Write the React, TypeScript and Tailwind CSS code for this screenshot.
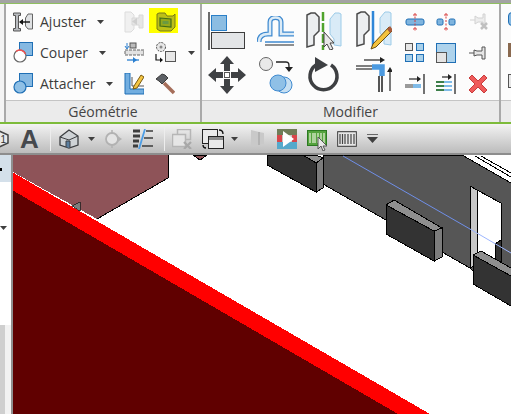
import React from 'react';

type IconProps = { w?: number; h?: number; className?: string; children: React.ReactNode };

const Ico: React.FC<IconProps> = ({ w = 20, h = 20, className = '', children }) => (
  <svg width={w} height={h} viewBox={`0 0 ${w} ${h}`} className={`shrink-0 ${className}`}>
    {children}
  </svg>
);

const Caret: React.FC<{ className?: string }> = ({ className = '' }) => (
  <svg width="7" height="4" viewBox="0 0 7 4" className={`shrink-0 ${className}`}>
    <path d="M0 0h7L3.5 4z" fill="#3f3f3f" />
  </svg>
);

const Doc = () => (
  <path d="M1 3 L5 1 H9 L13 5 V19 L8 24 V33 L1 35z" fill="#eceef0" stroke="#4a4a4a" strokeWidth="1.5" />
);

const Ghost = () => (
  <path d="M33 1 H29 L24 7 V22 L28 27 V33 L35 34 V2z" fill="#d9ebf7" stroke="#9ccbe8" strokeWidth="1" />
);

/* ---- Géométrie ---- */
const Ajuster = () => (
  <Ico>
    <path d="M0.5 1h7v2.5h-2v13h2V19h-7v-2.5h2v-13h-2z" fill="#b9bcc0" stroke="#555" />
    <path d="M12.5 6 L15 2h4.5v15H15l-2.500-3z" fill="#dfe1e3" stroke="#666" />
    <path d="M17 10H7" stroke="#111" strokeWidth="1.400" />
    <path d="M6 10l4-3v6z" fill="#111" />
  </Ico>
);
const Couper = () => (
  <Ico h={21}>
    <rect x="6.500" y="0.500" width="13" height="13" fill="#86b9e2" stroke="#1f6fb5" />
    <circle cx="7" cy="14" r="6" fill="#fff" stroke="#666" strokeWidth="1.200" />
    <path d="M3 9.500a6 6 0 0 1 9.500 2.500" fill="none" stroke="#ef5050" strokeWidth="1.400" />
  </Ico>
);
const Attacher = () => (
  <Ico h={21}>
    <rect x="6.500" y="0.500" width="13" height="13" fill="#86b9e2" stroke="#1f6fb5" />
    <circle cx="7" cy="14" r="6" fill="#8fc0e6" stroke="#1f6fb5" strokeWidth="1.200" />
  </Ico>
);
const Coping = () => (
  <Ico h={22}>
    <path d="M1 1h6l3 3v14l-3 3H1z" fill="#f0f0f0" stroke="#dcdcdc" />
    <path d="M8 7h7V4h4v13h-4v-3H8z" fill="#e6e6e6" stroke="#d8d8d8" />
    <path d="M8 10.500l5-3.500v7z" fill="#cfcfcf" />
  </Ico>
);
const Wall = () => (
  <Ico h={20}>
    <path d="M1 2l2-1h6l2 3h6l2-2v13l-4 4H4l-3-2z" fill="#bcbf18" stroke="#787a18" />
    <path d="M4 6l11 1v8L4 14z" fill="#95a81c" stroke="#3f6c18" strokeWidth="1.200" />
    <rect x="6.500" y="9" width="6" height="3" fill="#6a9a40" />
  </Ico>
);
const Split = () => (
  <Ico h={21}>
    <rect x="6" y="1" width="6" height="5" fill="#bbb" stroke="#555" />
    <path d="M3 1v5M1 4l2 3 2-3" fill="none" stroke="#2a7fd0" />
    <rect x="1" y="8" width="19" height="5" fill="#e2e2e2" stroke="#666" strokeDasharray="3 1" />
    <path d="M3 18h12" stroke="#2a7fd0" strokeWidth="1.300" />
    <path d="M9 15l4 3-4 3z" fill="#2a7fd0" />
  </Ico>
);
const Swap = () => (
  <Ico w={22} h={21}>
    <circle cx="6" cy="5" r="4.500" fill="#e7e7e7" stroke="#555" strokeDasharray="2 1" />
    <circle cx="6" cy="5" r="1.500" fill="#888" />
    <rect x="10.500" y="9.500" width="10" height="10" fill="#e7e7e7" stroke="#555" />
    <path d="M1 12v6h6" fill="none" stroke="#111" strokeWidth="1.200" />
    <path d="M8 18l-3-2.500v5z" fill="#111" />
  </Ico>
);
const Corner = () => (
  <Ico h={22}>
    <path d="M1 0h5v16h14v5H1z" fill="#72aee0" stroke="#1f6fb5" />
    <path d="M8 4v9h12" fill="none" stroke="#555" />
    <path d="M10 13l7-11 3 2-7 11-4 1z" fill="#f4c542" stroke="#7a5a10" />
  </Ico>
);
const Hammer = () => (
  <Ico h={22}>
    <path d="M9 10l10 10" stroke="#a56e5a" strokeWidth="3.500" />
    <path d="M1 6l6-5 3 1 3 3-6 6-3-3z" fill="#5d6065" stroke="#3a3a3a" />
  </Ico>
);

/* ---- Modifier, grands ---- */
const Align = () => (
  <Ico w={38} h={38}>
    <path d="M1 0v38" stroke="#3d3d3d" strokeWidth="1.500" />
    <rect x="3.500" y="3.500" width="15" height="15" fill="#8cbde2" stroke="#2a7fc8" />
    <rect x="3.500" y="20.500" width="33" height="16" fill="#e3e5e7" stroke="#3d3d3d" />
  </Ico>
);
const Offset = () => (
  <Ico w={38} h={30}>
    <path d="M2 26c0-6 4-8 9-8h2V6c0-6 11-6 11 0v12h13" fill="none" stroke="#3f8ad0" strokeWidth="5" />
    <path d="M2 26c0-6 4-8 9-8h2V6c0-6 11-6 11 0v12h13" fill="none" stroke="#dcebf6" strokeWidth="2.500" />
    <path d="M8 29h29" stroke="#6b6b6b" strokeWidth="1.500" />
    <path d="M8 26h29" stroke="#3f8ad0" strokeWidth="1.500" />
  </Ico>
);
const MirrorPick = () => (
  <Ico w={36} h={38}>
    <Doc />
    <Ghost />
    <path d="M17 0v38" stroke="#4fa32c" strokeWidth="2.500" strokeDasharray="9 2" />
    <path d="M18 20v15l3-3 3 6 3-1-3-6h4z" fill="#e8e8e8" stroke="#444" />
  </Ico>
);
const MirrorDraw = () => (
  <Ico w={36} h={40}>
    <Doc />
    <Ghost />
    <path d="M17 0v37" stroke="#2f86d8" strokeWidth="2.500" />
    <path d="M17 33l16-17 3 4-16 16-5 2z" fill="#f4c23c" stroke="#6b4f12" />
    <path d="M31 18l3-3 3 4-3 3z" fill="#a85a3a" />
  </Ico>
);
const MoveIco = () => (
  <Ico w={38} h={38}>
    <path d="M19 0l7 8h-4v7h-6V8h-4zM19 38l-7-8h4v-7h6v7h4zM0 19l8-7v4h7v6H8v4zM38 19l-8 7v-4h-7v-6h7v-4z" fill="#3f4144" />
    <rect x="16.500" y="16.500" width="5" height="5" fill="#fff" stroke="#555" />
  </Ico>
);
const CopyIco = () => (
  <Ico w={36} h={38}>
    <circle cx="9" cy="8" r="6.500" fill="#e9e9e9" stroke="#666" />
    <path d="M19 6h10c3 0 3 2 3 5" fill="none" stroke="#222" strokeWidth="1.300" />
    <path d="M32 16l-4-5h8z" fill="#222" />
    <circle cx="27" cy="29" r="8" fill="#c6dff2" stroke="#3f8ad0" />
    <circle cx="21" cy="27" r="8" fill="#8fc0e6" stroke="#3f8ad0" />
  </Ico>
);
const RotateIco = () => (
  <Ico w={34} h={38}>
    <path d="M10 9A13.500 13.500 0 1 0 25 9" fill="none" stroke="#3d3f42" strokeWidth="3.500" />
    <path d="M9 1l13 8-13 7z" fill="#3d3f42" />
  </Ico>
);
const TrimIco = () => (
  <Ico w={36} h={36}>
    <path d="M0 9h24M0 12h16" stroke="#555" strokeWidth="1.300" />
    <path d="M8 3h16" stroke="#222" strokeWidth="1.200" />
    <path d="M24 0l5 3-5 3z" fill="#222" />
    <path d="M16 10h10v9" fill="none" stroke="#4c9ae0" strokeWidth="5.500" />
    <path d="M26 19v16M23 19v16" stroke="#555" strokeWidth="2" />
    <path d="M34 34V13" stroke="#222" strokeWidth="1.200" />
    <path d="M34 10l3 5h-6z" fill="#222" />
  </Ico>
);

/* ---- Modifier, petits ---- */
const Cut1 = () => (
  <Ico w={20} h={18}>
    <rect x="1" y="6" width="18" height="6" rx="2" fill="#7fb4de" stroke="#1f6fb5" />
    <path d="M10 0v18" stroke="#d83a3a" strokeDasharray="2 1.500" />
    <path d="M8 2h4M8 16h4" stroke="#d83a3a" />
  </Ico>
);
const Cut2 = () => (
  <Ico w={20} h={18}>
    <rect x="1" y="6" width="6" height="6" rx="1.500" fill="#7fb4de" stroke="#1f6fb5" />
    <rect x="13" y="6" width="6" height="6" rx="1.500" fill="#7fb4de" stroke="#1f6fb5" />
    <path d="M10 0v18" stroke="#d83a3a" strokeDasharray="2 1.500" />
    <path d="M8 2h4M8 16h4" stroke="#d83a3a" />
  </Ico>
);
const UnpinOff = () => (
  <Ico w={20} h={20}>
    <path d="M1 8h5M6 4l3 2h5V2h2v12h-2v-4H9l-3 2z" fill="#ededed" stroke="#d2d2d2" />
    <path d="M12 11l6 6M18 11l-6 6" stroke="#c0c0c0" strokeWidth="2.500" />
  </Ico>
);
const ArrayIco = () => (
  <Ico w={20} h={20}>
    <rect x="0.500" y="0.500" width="7" height="7" fill="#e6e6e6" stroke="#555" />
    <rect x="11.500" y="0.500" width="7" height="7" fill="#a8d0ea" stroke="#1f6fb5" />
    <rect x="0.500" y="11.500" width="7" height="7" fill="#a8d0ea" stroke="#1f6fb5" />
    <rect x="11.500" y="11.500" width="7" height="7" fill="#a8d0ea" stroke="#1f6fb5" />
  </Ico>
);
const ScaleIco = () => (
  <Ico w={20} h={20}>
    <rect x="0.500" y="0.500" width="19" height="19" fill="#aed3ec" stroke="#1f6fb5" />
    <rect x="0.500" y="9.500" width="10" height="10" fill="#e4e4e4" stroke="#555" />
  </Ico>
);
const PinIco = () => (
  <Ico w={18} h={14}>
    <path d="M0 7h5" stroke="#555" />
    <path d="M5 4l3 1h5V1h3v12h-3V9H8l-3 1z" fill="#e6e6e6" stroke="#555" />
  </Ico>
);
const TrimOne = () => (
  <Ico w={20} h={20}>
    <path d="M19 0v20" stroke="#444" strokeWidth="1.500" />
    <path d="M4 5h9" stroke="#222" strokeWidth="1.200" />
    <path d="M16 5l-4-3v6z" fill="#222" />
    <rect x="0" y="10" width="8" height="4" fill="#9a9a9a" />
    <rect x="8" y="10" width="8" height="4" fill="#7fbbe8" />
  </Ico>
);
const TrimMany = () => (
  <Ico w={20} h={20}>
    <path d="M19 0v20" stroke="#444" strokeWidth="1.500" />
    <path d="M6 3h7" stroke="#222" strokeWidth="1.200" />
    <path d="M16 3l-4-3v6z" fill="#222" />
    <path d="M0 8h8M0 12h8M0 16h8" stroke="#3d7f4a" strokeWidth="2" />
    <path d="M8 8h8M8 12h8M8 16h8" stroke="#7fbbe8" strokeWidth="2" />
  </Ico>
);
const DeleteIco = () => (
  <Ico w={18} h={18}>
    <path d="M3 0l6 6 6-6 3 3-6 6 6 6-3 3-6-6-6 6-3-3 6-6-6-6z" fill="#ef5b5b" stroke="#c83c3c" />
  </Ico>
);

/* ---- Barre d'outils ---- */
const House = () => (
  <Ico w={20} h={20}>
    <path d="M1 8l9-7 9 6v9l-9 3-9-3z" fill="#cfd3d6" stroke="#3d3f42" strokeWidth="1.300" />
    <path d="M1 8l9 3 9-4" fill="none" stroke="#3d3f42" />
    <path d="M7 18v-6h4v7" fill="#5b7fa0" stroke="#3d3f42" />
  </Ico>
);
const Target = () => (
  <Ico w={18} h={18}>
    <circle cx="8" cy="9" r="6" fill="#e4e4e4" stroke="#b2b2b2" strokeWidth="1.800" />
    <path d="M8 0v3M8 15v3" stroke="#b2b2b2" strokeWidth="1.500" />
    <path d="M18 9l-5-3.500v7z" fill="#b2b2b2" />
  </Ico>
);
const Lines = () => (
  <Ico w={20} h={20}>
    <path d="M0 2h7M0 7h7M0 12h6M0 17h5" stroke="#3d3d3d" strokeWidth="3" />
    <path d="M13 2h7M11 9h9M9 17h11" stroke="#3d3d3d" strokeWidth="1.500" />
    <path d="M12 0L6 20" stroke="#4d9ee6" strokeWidth="1.800" />
  </Ico>
);
const WinOff = () => (
  <Ico w={20} h={20}>
    <rect x="5.500" y="0.500" width="13" height="10" fill="none" stroke="#b6b6b6" strokeWidth="1.500" />
    <rect x="0.500" y="5.500" width="13" height="12" fill="#e6e6e6" stroke="#b6b6b6" strokeWidth="1.500" />
    <path d="M12 13l7 7M19 13l-7 7" stroke="#a8a8a8" strokeWidth="2.200" />
  </Ico>
);
const WinSwitch = () => (
  <Ico w={22} h={20}>
    <rect x="0.500" y="0.500" width="15" height="14" fill="#e9e9e9" stroke="#222" />
    <rect x="6.500" y="7.500" width="15" height="12" fill="#e9e9e9" stroke="#222" />
    <rect x="7" y="8" width="14" height="3" fill="#8a8a8a" />
    <path d="M17 1c3 0 4 1 4 4M1 16c0 2 1 3 3 3" fill="none" stroke="#111" strokeWidth="1.300" />
  </Ico>
);
const ShieldOff = () => (
  <Ico w={15} h={19}>
    <path d="M1 1l8 2 5 1v11l-5 1-8 2z" fill="#c9c9c9" />
    <path d="M9 3v13" stroke="#ababab" strokeWidth="1.500" />
  </Ico>
);
const Player = () => (
  <Ico w={20} h={20}>
    <rect width="20" height="6" y="0" fill="#6f7d58" />
    <rect width="20" height="7" y="6" fill="#c9c5c0" />
    <rect width="20" height="7" y="13" fill="#55a9cb" />
    <rect x="0" y="6" width="5" height="7" fill="#d8464a" />
    <rect x="15" y="6" width="5" height="7" fill="#d8464a" />
    <path d="M6 2l11 8-11 8z" fill="#fff" />
  </Ico>
);
const BarGreen = () => (
  <Ico w={22} h={22}>
    <rect x="0.500" y="1.500" width="19" height="15" fill="#55a33e" stroke="#2c7a22" />
    <path d="M3 4v10M6 4v10M8 4v10M11 4v10M14 4v10M17 4v10" stroke="#eaf3dc" strokeWidth="1.200" />
    <path d="M11 8v12l3-3 2 5 2-1-2-4h4z" fill="#e8e8e8" stroke="#555" />
  </Ico>
);
const BarGrey = () => (
  <Ico w={20} h={16}>
    <rect x="0.500" y="0.500" width="19" height="15" rx="1" fill="#e6e6e6" stroke="#555" strokeWidth="1.300" />
    <path d="M3 3v10M5.500 3v10M8 3v10M11 3v10M14 3v10M17 3v10" stroke="#444" strokeWidth="1.200" />
  </Ico>
);
const MenuDown = () => (
  <Ico w={11} h={9}>
    <path d="M0 0h11" stroke="#3f3f3f" strokeWidth="1.500" />
    <path d="M0 3h11L5.500 9z" fill="#3f3f3f" />
  </Ico>
);

const Sep = () => <div className="w-px h-[24px] bg-[#a9a9a9] shrink-0 border-r border-[#ededed]" />;

const GeoRow: React.FC<{ icon: React.ReactNode; label: string; caretGap: string; a: React.ReactNode; b: React.ReactNode; tail?: boolean }> = ({ icon, label, caretGap, a, b, tail }) => (
  <div className="flex items-center h-[31px] pl-[7px]">
    <div className="w-5 flex justify-center">{icon}</div>
    <div className="w-[91px] pl-[7px] flex items-center">
      <span className="text-[14px] leading-none text-[#3c3c3c]">{label}</span>
      <Caret className={caretGap} />
    </div>
    <div className="w-[31px]">{a}</div>
    <div className="w-5">{b}</div>
    {tail && <Caret className="ml-[13px]" />}
  </div>
);

const PanelTitle: React.FC<{ text: string }> = ({ text }) => (
  <div className="h-[22px] bg-[#ebebeb] border-t border-[#c4c4c4] flex items-center justify-center text-[14px] text-[#444]">
    {text}
  </div>
);

const Scene = () => (
  <svg viewBox="13 155 498 259" width="498" height="259" className="block" shapeRendering="crispEdges">
    <rect x="13" y="155" width="498" height="259" fill="#fff" />
    {/* toit */}
    <path d="M13 155H168V178L97 219 13 172z" fill="#8e5358" />
    <path d="M168 155V178L97 219" fill="none" stroke="#000" />
    <path d="M13 172.500L430 414H398L13 190.500z" fill="#ff0000" />
    <path d="M13 190.500L398 414H13z" fill="#600000" />
    <path d="M72 206l8-4v9z" fill="#7e7e7e" stroke="#222" strokeWidth="0.800" />
    <path d="M193 155h14l-7 5z" fill="#8e5358" stroke="#000" />
    {/* mur */}
    <path d="M323 155H462L511 183V306L470 268 323 184z" fill="#565656" stroke="#000" />
    <path d="M462 155L511 183" stroke="#000" fill="none" />
    <path d="M475 156L511 177" stroke="#000" fill="none" />
    <path d="M481 156L511 173" stroke="#000" fill="none" />
    {/* ligne de niveau */}
    <path d="M343 156L470 229" stroke="#6f8fe8" fill="none" shapeRendering="auto" />
    {/* porte */}
    <path d="M470 186L477 190V264L470 268z" fill="#c6c6c6" stroke="#000" />
    <path d="M477 190L501 203V270H477z" fill="#fff" stroke="#000" />
    <path d="M495 244L501 240V268H495z" fill="#333" stroke="#000" />
    <path d="M470 229L511 253" stroke="#9db6ff" fill="none" shapeRendering="auto" />
    {/* bloc 1 */}
    <path d="M267 155V165L316 192V163L303 155z" fill="#333" stroke="#000" />
    <path d="M316 163L323 158V188L316 192z" fill="#7c7c7c" stroke="#000" />
    <path d="M303 155L316 163 323 158 316 155z" fill="#8f8f8f" stroke="#000" />
    {/* bloc 2 */}
    <path d="M386 205V234L434 261V231z" fill="#333" stroke="#000" />
    <path d="M434 231L442 228V257L434 261z" fill="#7c7c7c" stroke="#000" />
    <path d="M386 205L394 200 442 228 434 231z" fill="#8f8f8f" stroke="#000" />
    {/* bloc 3 */}
    <path d="M473 255V284L511 306V276z" fill="#333" stroke="#000" />
    <path d="M473 255L481 251 511 268V276z" fill="#8f8f8f" stroke="#000" />
  </svg>
);

export default function App() {
  return (
    <div className="w-[511px] h-[414px] overflow-hidden flex flex-col bg-white font-['Open_Sans','Noto_Sans',sans-serif]">
      <div className="h-[3px] bg-[#a3a3a3]" />
      <div className="h-px bg-[#8fbf60]" />

      {/* ruban */}
      <div className="flex h-[118px] bg-[#fcfcfc]">
        <div className="w-[6px] border-r-2 border-[#a9a9a9] bg-[#f4f4f4] shrink-0" />

        <div className="w-[194px] shrink-0 flex flex-col">
          <div className="h-[96px] pt-[2px]">
            <GeoRow icon={<Ajuster />} label="Ajuster" caretGap="ml-[11px]" a={<Coping />} b={
              <div className="relative">
                <div className="absolute left-[-6px] top-[-4px] w-[29px] h-[25px] bg-[#ffff00]" />
                <div className="relative ml-[1px]"><Wall /></div>
              </div>
            } />
            <GeoRow icon={<Couper />} label="Couper" caretGap="ml-[11px]" a={<Split />} b={<Swap />} tail />
            <GeoRow icon={<Attacher />} label="Attacher" caretGap="ml-[10px]" a={<Corner />} b={<Hammer />} />
          </div>
          <PanelTitle text="Géométrie" />
        </div>

        <div className="w-[299px] shrink-0 flex flex-col border-l-2 border-[#a9a9a9]">
          <div className="h-[96px] flex">
            <div className="w-[196px] pl-[6px] grid grid-cols-[49px_49px_50px_48px] grid-rows-[44px_44px] pt-[5px] items-center">
              <Align />
              <Offset />
              <MirrorPick />
              <MirrorDraw />
              <MoveIco />
              <CopyIco />
              <RotateIco />
              <TrimIco />
            </div>
            <div className="flex-1 grid grid-cols-[31px_33px_28px] grid-rows-[30px_31px_31px] pt-[3px] pl-[7px] items-center">
              <Cut1 />
              <Cut2 />
              <UnpinOff />
              <ArrayIco />
              <ScaleIco />
              <PinIco />
              <TrimOne />
              <TrimMany />
              <DeleteIco />
            </div>
          </div>
          <PanelTitle text="Modifier" />
        </div>

        <div className="flex-1 min-w-0 flex flex-col border-l-2 border-[#a9a9a9] overflow-hidden">
          <div className="h-[96px] pl-[7px] pt-[8px] flex flex-col gap-[17px]">
            <div className="w-5 h-[14px] shrink-0 rounded-sm bg-[#86b9e2] border border-[#1f6fb5]" />
            <div className="w-5 h-[14px] shrink-0 bg-[#8a6a50]" />
            <div className="w-5 h-[14px] shrink-0 bg-[#e8e8e8] border border-[#555]" />
          </div>
          <PanelTitle text="" />
        </div>
      </div>

      <div className="h-[2px] bg-[#7dbb3a]" />

      {/* barre d'outils */}
      <div className="h-[31px] flex items-center bg-linear-to-b from-[#f3f3f3] to-[#bcbcbc] border-b-2 border-[#8d8d8d] overflow-hidden">
        <svg width="9" height="18" viewBox="0 0 9 18" className="shrink-0">
          <path d="M-1 1l9 4v8l-9 4z" fill="#e8e8e8" stroke="#444" strokeWidth="1.500" />
          <text x="0.500" y="13" fontSize="10" fontFamily="Liberation Sans" fill="#333">1</text>
        </svg>
        <span className="ml-[11px] w-[19px] text-[26px] leading-none font-bold text-[#46494d] font-['Liberation_Sans',sans-serif]">A</span>
        <div className="ml-[11px]"><Sep /></div>
        <div className="ml-[8px]"><House /></div>
        <Caret className="ml-[9px]" />
        <div className="ml-[9px]"><Target /></div>
        <div className="ml-[11px]"><Lines /></div>
        <div className="ml-[11px]"><Sep /></div>
        <div className="ml-[7px]"><WinOff /></div>
        <div className="ml-[10px]"><WinSwitch /></div>
        <Caret className="ml-[7px]" />
        <div className="ml-[12px]"><ShieldOff /></div>
        <div className="ml-[12px]"><Player /></div>
        <div className="ml-[10px] mt-[3px]"><BarGreen /></div>
        <div className="ml-[8px]"><BarGrey /></div>
        <div className="ml-[10px]"><MenuDown /></div>
      </div>

      {/* vue 3D */}
      <div className="flex flex-1 min-h-0">
        <div className="w-[13px] shrink-0 flex flex-col border-r-2 border-[#8f8f8f] bg-[#f2f2f2]">
          <div className="h-[27px] bg-[#d4e0ea] relative">
            <div className="absolute left-0 top-[13px] w-[2px] h-[3px] bg-black" />
          </div>
          <div className="h-[143px] bg-white pt-[44px]">
            <Caret />
          </div>
          <div className="flex-1 w-[5px] bg-[#cfcfcf]" />
        </div>
        <div className="flex-1 min-w-0 overflow-hidden">
          <Scene />
        </div>
      </div>
    </div>
  );
}
